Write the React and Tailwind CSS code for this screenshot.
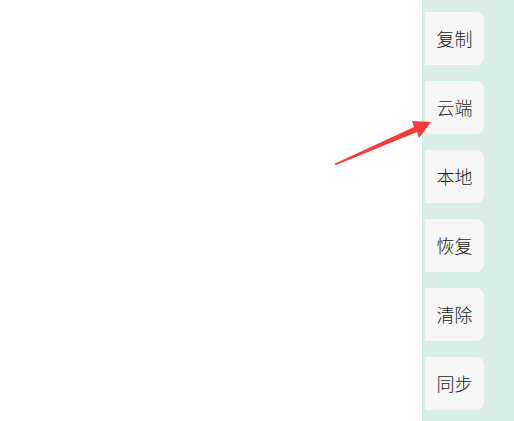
export default function App() {
  const items = ["复制", "云端", "本地", "恢复", "清除", "同步"];
  return (
    <div className="relative flex h-[421px] w-[514px] overflow-hidden bg-white" style={{ fontFamily: '"Noto Sans CJK SC", "Liberation Sans", sans-serif' }}>
      <div className="flex-1 bg-white" />
      <div className="flex w-[92px] flex-col gap-4 border-l border-[#d2e6df] bg-[#dbede7] pl-[2px] pt-3">
        {items.map((t) => (
          <div key={t} className="flex h-[53px] w-[59px] items-center justify-center rounded-r-lg bg-[#f7f7f7] text-[18px] font-light text-[#1a1a1a]">
            {t}
          </div>
        ))}
      </div>
      <svg className="absolute left-0 top-0" width="514" height="421" viewBox="0 0 514 421">
        <polygon points="334,164 414,127 412,121 431,122 419,138 417,132 336,165" fill="#f53b3b" />
      </svg>
    </div>
  );
}
